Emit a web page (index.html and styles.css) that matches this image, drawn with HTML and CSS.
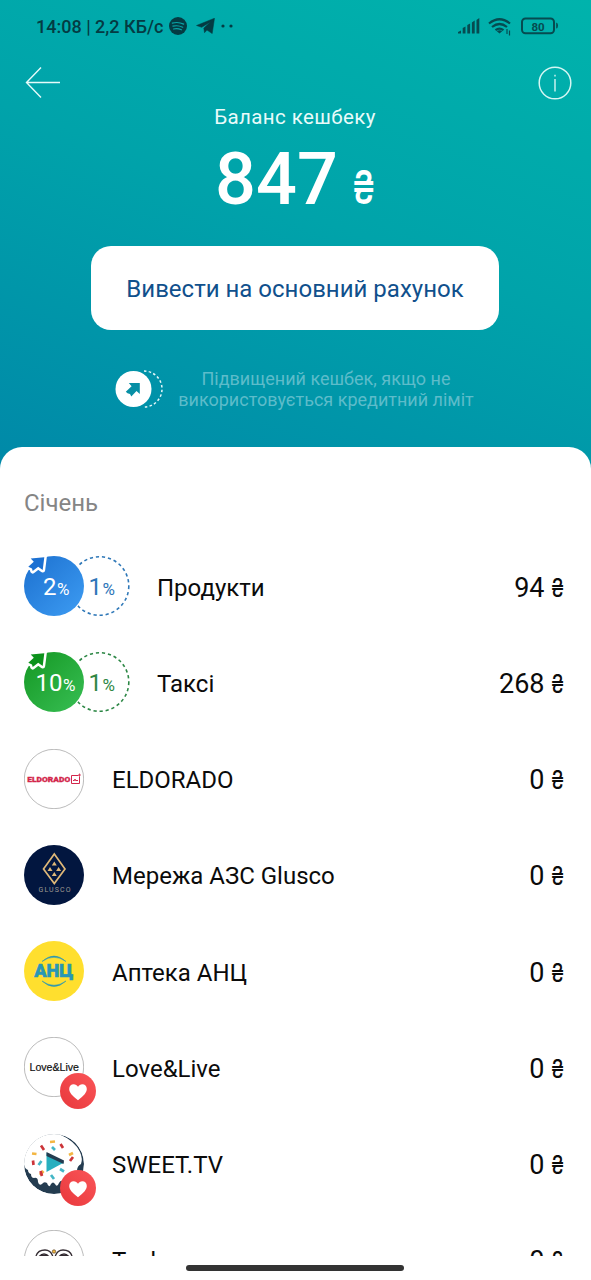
FILE: index.html
```html
<!DOCTYPE html>
<html lang="uk">
<head>
<meta charset="utf-8">
<title>Баланс кешбеку</title>
<link rel="stylesheet" href="styles.css">
</head>
<body>
<svg class="defs" width="0" height="0" aria-hidden="true">
  <defs>
    <linearGradient id="blue" x1="0" y1="0" x2="1" y2="1"><stop offset="0" stop-color="#1c70cf"/><stop offset="1" stop-color="#3d9cf3"/></linearGradient>
    <linearGradient id="green" x1="0" y1="0" x2="1" y2="1"><stop offset="0" stop-color="#149723"/><stop offset="1" stop-color="#38bf54"/></linearGradient>
    <linearGradient id="red" x1="0" y1="1" x2="1" y2="0"><stop offset="0" stop-color="#e8383c"/><stop offset="1" stop-color="#fa5558"/></linearGradient>
    <clipPath id="disc"><circle cx="30" cy="30" r="30"/></clipPath>
    <symbol id="heart" viewBox="0 0 36 36">
      <circle cx="18" cy="18" r="18" fill="url(#red)"/>
      <path d="M18 27.2C12 22.5 9.200 19.500 9.200 16c0-2.800 1.900-4.800 4.500-4.800 1.800 0 3.300.9 4.300 2.500 1-1.600 2.500-2.500 4.300-2.500 2.600 0 4.500 2 4.500 4.800 0 3.500-2.800 6.500-8.800 11.200z" fill="#fff"/>
    </symbol>
  </defs>
</svg>
<div class="screen">
  <header class="hero">
    <div class="status">
      <span class="clock">14:08 | 2,2 КБ/с</span>
      <svg class="spotify" width="18" height="18" viewBox="0 0 18 18"><circle cx="9" cy="9" r="9" fill="#043b43"/><path d="M3.3 6.1q6-1.6 11.4 1M3.9 9.2q5-1.3 9.8 1M4.6 12q4-1 7.8.8" fill="none" stroke="#0aa5a8" stroke-width="1.2" stroke-linecap="round"/></svg>
      <svg class="telegram" width="19" height="16" viewBox="0 0 19 16"><path d="M.5 7.5 18.5.2 16.2 15.6 11 12.1 8.5 14.7 7.8 10 14.5 4 5.7 9.3z" fill="#043b43" stroke="#043b43" stroke-width=".5"/></svg>
      <svg class="dots" width="13" height="4" viewBox="0 0 13 4"><circle cx="2" cy="2" r="1.6" fill="#043b43"/><circle cx="10" cy="2" r="1.6" fill="#043b43"/></svg>
      <svg class="system" width="102" height="20" viewBox="0 0 102 20">
        <path d="M1 17.500v-1.500l3-1.500v3zM5.700 17.500v-5.500l2.800-1.500v7zM10.300 17.500v-8.500l2.800-1.500v10zM14.900 17.500V6.500l2.800-2v13zM19.500 17.500V4l2.800-2v15.500z" fill="#064b50"/>
        <path d="M32 7.500q10.500-8.500 21 0M35 11q7.500-6 15 0M38.500 14.100q4-3 8 0" fill="none" stroke="#064b50" stroke-width="2.200"/>
        <path d="m39.600 15 2.900 2.500 2.900-2.500q-2.900-1.500-5.800 0z" fill="#064b50"/>
        <path d="M50 13v5M52.500 14.500v5" stroke="#064b50" stroke-width="1.200"/>
        <rect x="65" y="2.400" width="32" height="14.800" rx="3.500" fill="none" stroke="#064b50" stroke-width="2"/>
        <path d="M99.200 6.500v6q1.800-.5 1.800-3t-1.800-3z" fill="#064b50"/>
        <text class="battery" x="81" y="14.500">80</text>
      </svg>
    </div>
    <nav class="nav">
      <svg width="36" height="32" viewBox="0 0 36 32"><path d="M35 15.500H2M16 .5 1.500 15.500 16 30.500" fill="none" stroke="#e6fbfa" stroke-width="1.400"/></svg>
      <svg width="34" height="34" viewBox="0 0 34 34"><circle cx="17" cy="17" r="15.800" fill="none" stroke="#d5f6f3" stroke-width="1.500"/><path d="M17 13v12.500M17 8.800v1.800" stroke="#d5f6f3" stroke-width="1.400"/></svg>
    </nav>
    <div class="caption">Баланс кешбеку</div>
    <div class="balance"><span class="sum">847</span><span class="unit">₴</span></div>
    <button class="withdraw">Вивести на основний рахунок</button>
    <div class="hint">
      <svg width="48" height="38" viewBox="0 0 48 38"><path d="M29 1a18 18 0 0 1 0 36" fill="none" stroke="#e6f8fa" stroke-width="1.500" stroke-dasharray="2.500 2.300"/><circle cx="18.500" cy="19" r="18" fill="#fff"/><path d="M13.800 13h11v11l-3.300-3.100-5.200 5.600-1.300-2.500-2.500-.7-1.700-1.600 5.800-5.400z" fill="#078fa5"/></svg>
      <p class="hint-text">Підвищений кешбек, якщо не<br>використовується кредитний ліміт</p>
    </div>
  </header>
  <main class="sheet">
    <h2 class="month">Січень</h2>
    <ul class="list">
      <li class="row">
        <svg class="pair blue" width="108" height="60" viewBox="0 0 108 60"><circle cx="75.500" cy="30" r="29.300" fill="#fff" stroke="#2f78b8" stroke-width="1.600" stroke-dasharray="3.200 2.900"/><circle cx="30" cy="30" r="31" fill="#fff"/><circle cx="30" cy="30" r="30" fill="url(#blue)"/><path class="boost" d="M6.700 2.500 20.300 1.200 18.700 14 14.200 10.700 8.700 15 8 12.500 4.300 10.700 9.800 5.700z" fill="#1b70d2"/><text class="rate light" x="19" y="39">2<tspan class="pct" dx=".5">%</tspan></text><text class="rate" x="64.500" y="39">1<tspan class="pct" dx=".5">%</tspan></text></svg>
        <span class="name">Продукти</span><span class="amount">94<i>₴</i></span>
      </li>
      <li class="row">
        <svg class="pair green" width="108" height="60" viewBox="0 0 108 60"><circle cx="75.500" cy="30" r="29.300" fill="#fff" stroke="#2c8745" stroke-width="1.600" stroke-dasharray="3.200 2.900"/><circle cx="30" cy="30" r="31" fill="#fff"/><circle cx="30" cy="30" r="30" fill="url(#green)"/><path class="boost" d="M6.700 2.500 20.300 1.200 18.700 14 14.200 10.700 8.700 15 8 12.500 4.300 10.700 9.800 5.700z" fill="#0c921c"/><text class="rate light" x="11.500" y="39">10<tspan class="pct" dx=".5">%</tspan></text><text class="rate" x="64.500" y="39">1<tspan class="pct" dx=".5">%</tspan></text></svg>
        <span class="name">Таксі</span><span class="amount">268<i>₴</i></span>
      </li>
      <li class="row">
        <svg class="logo" width="60" height="60" viewBox="0 0 60 60"><circle cx="30" cy="30" r="29.700" fill="#fff" stroke="#777" stroke-width=".5"/><text class="eldorado" x="3.300" y="33.300" textLength="43" lengthAdjust="spacingAndGlyphs">ELDORADO</text><path d="M54.500 26.500H47.500v8h8v-7M49 31.500h1.500l.5-1.500.5 1.500h2.500" fill="none" stroke="#d3264b" stroke-width="1"/><path d="M54 26h3M55.500 24.500v3" stroke="#d3264b" stroke-width=".8"/></svg>
        <span class="name">ELDORADO</span><span class="amount">0<i>₴</i></span>
      </li>
      <li class="row">
        <svg class="logo" width="60" height="60" viewBox="0 0 60 60"><circle cx="30" cy="30" r="30" fill="#02163f"/><path d="M30.300 9 41 24 30.300 38.500 19.500 24z" fill="none" stroke="#dfb878" stroke-width="1.700"/><path d="m30.300 16.500 2.500 4h-5zM26 22l2.500 4h-5zM34.600 22l2.500 4h-5zM30.300 27l2.500 4h-5z" fill="#dfb878"/><text class="glusco" x="14.500" y="46.500" textLength="32">GLUSCO</text></svg>
        <span class="name">Мережа АЗС Glusco</span><span class="amount">0<i>₴</i></span>
      </li>
      <li class="row">
        <svg class="logo" width="60" height="60" viewBox="0 0 60 60"><circle cx="30" cy="30" r="30" fill="#ffdf2e"/><path d="M18 20.500q12-11 24 0-12-8.500-24 0zM18 40q12 11 24 0-12 8.500-24 0z" fill="#2997b5" stroke="#2997b5" stroke-width=".5"/><text class="anc" x="10.300" y="35.800" textLength="39" lengthAdjust="spacingAndGlyphs">АНЦ</text></svg>
        <span class="name">Аптека АНЦ</span><span class="amount">0<i>₴</i></span>
      </li>
      <li class="row">
        <span class="logo"><svg width="60" height="60" viewBox="0 0 60 60"><circle cx="30" cy="30" r="29.700" fill="#fff" stroke="#777" stroke-width=".5"/><text class="lovelive" x="5.500" y="34.300" textLength="49.500" lengthAdjust="spacingAndGlyphs">Love&amp;Live</text></svg><svg class="badge" width="36" height="36"><use href="#heart"/></svg></span>
        <span class="name">Love&amp;Live</span><span class="amount">0<i>₴</i></span>
      </li>
      <li class="row">
        <span class="logo"><svg width="60" height="60" viewBox="0 0 60 60"><g clip-path="url(#disc)"><circle cx="30" cy="30" r="30" fill="#243c50"/><path d="M0 0H35Q51 7 56 18q3 7 1 12-4 2-4 7v6q-3 5-5 1-3-1-4 3-1 5-4 1-3-3-5 1-2 5-4 1-2-3-4 0-2 5-4-1-3-2-5 1-3 2-4-2 0-5-4-4-3 0-3-4-3-1-3-4-3-1-4-5z" fill="#fff"/></g>
          <path d="M22.500 19v19l17.500-9.500z" fill="#27afbf"/><path d="m22.500 18 17.500 8.500-.5 3.500-17-8z" fill="#243c50"/>
          <g fill="none" stroke-width="2.700"><path d="m26 8 5-.5M8 19.500l4.500.500M16 41l3.500-4M45 21l4-2" stroke="#f3b643"/><path d="m17 11.500 3 4.500M36.500 10l2.500 4M9 26.500l.5 4.500M46 27l3-4M16.500 37l1.500 5" stroke="#cc3439"/><path d="m28 13 3 3M14.500 31l3-4M36 35l4 2.500M27 41l3 4" stroke="#43b6c6"/></g></svg><svg class="badge" width="36" height="36"><use href="#heart"/></svg></span>
        <span class="name">SWEET.TV</span><span class="amount">0<i>₴</i></span>
      </li>
      <li class="row">
        <svg class="logo" width="60" height="60" viewBox="0 0 60 60"><circle cx="30" cy="30" r="29.700" fill="#fff" stroke="#777" stroke-width=".5"/><g fill="none" stroke="#332b31"><path d="M12 26q2-6 9-6 6 0 8 7M31 27q2-7 8-7 7 0 9 6" stroke-width="1.300"/><path d="M14 28q6-8 12 0M34 28q6-8 12 0" stroke-width="1.500"/><path d="M17 26h7M36 26h7" stroke-width="2.500"/></g><circle cx="30" cy="21.500" r="1.700" fill="#f2b63c" stroke="#5b4326" stroke-width=".7"/></svg>
        <span class="name">Task</span><span class="amount">0<i>₴</i></span>
      </li>
    </ul>
  </main>
  <footer class="home"><span class="handle"></span></footer>
</div>
</body>
</html>
```
FILE: styles.css
```css
* { box-sizing: border-box; }
body { margin: 0; font-family: Roboto, "Noto Sans", sans-serif; color: #0b0b0b; background: #fff; }
.defs { position: absolute; }
.screen { width: 591px; height: 1280px; display: flex; flex-direction: column; overflow: hidden; background: #fff; }
.hero { flex: none; height: 477px; padding-right: 1px; display: flex; flex-direction: column; align-items: center; background: linear-gradient(200deg, #00b3ac 0%, #00a3aa 46%, #0088a8 100%); color: #fff; }
.status { width: 100%; height: 52px; flex: none; padding: 0 31px 0 36px; display: flex; align-items: center; color: #043b43; }
.clock { font-size: 18px; font-weight: 500; width: 128px; white-space: nowrap; }
.spotify { margin-left: 5px; }
.telegram { margin-left: 9px; }
.dots { margin-left: 6px; }
.system { margin-left: auto; }
.battery { font: 700 11.500px Roboto, sans-serif; fill: #064b50; text-anchor: middle; }
.nav { width: 100%; height: 34px; flex: none; margin-top: 14px; padding: 0 18px 0 25px; display: flex; justify-content: space-between; align-items: center; }
.caption { margin-top: 4px; font-size: 20.500px; line-height: 26px; letter-spacing: .4px; color: #e9fbfa; }
.balance { height: 78px; margin-top: 11px; display: flex; align-items: baseline; line-height: 78px; }
.sum { font-size: 72px; font-weight: 500; }
.unit { display: inline-block; width: 23px; margin-left: 14px; font-family: Inter, sans-serif; font-size: 46px; font-weight: 500; transform: scaleX(.76); transform-origin: 0 50%; }
.withdraw { flex: none; width: 408px; height: 84px; margin-top: 27px; border: 0; border-radius: 20px; background: #fff; color: #10508c; font: 400 24px Roboto, sans-serif; padding: 2px 0 0; white-space: nowrap; }
.hint { display: flex; align-items: center; gap: 15px; margin-top: 38px; padding-right: 1px; }
.hint-text { margin: 0; font-size: 18px; line-height: 21px; text-align: center; color: #5dbcca; white-space: nowrap; }
.sheet { flex: none; height: 809px; margin-top: -30px; border-radius: 22px 22px 0 0; background: #fff; padding: 40px 26px 0 24px; overflow: hidden; }
.month { margin: 0; font-size: 24px; line-height: 32px; font-weight: 400; color: #858585; }
.list { margin: 19px 0 0; padding: 0; list-style: none; }
.row { height: 96.250px; display: flex; align-items: center; }
.logo { flex: none; width: 60px; height: 60px; margin-right: 28px; position: relative; }
.pair { flex: none; margin-right: 25px; overflow: visible; }
.logo svg { display: block; }
.logo .badge { position: absolute; left: 36px; top: 36px; }
.name { font-size: 24px; line-height: 30px; padding-top: 3px; flex: 1; white-space: nowrap; }
.amount { font-size: 27px; line-height: 30px; padding-top: 3px; white-space: nowrap; }
.amount i { display: inline-block; width: 14px; margin-left: 6.500px; font: 400 26px/26px Inter, sans-serif; transform: scaleX(.8); transform-origin: 0 50%; }
.rate { font: 400 24px Roboto, sans-serif; }
.pct { font-size: 17px; }
.boost { stroke: #fff; stroke-width: 5; stroke-linejoin: round; paint-order: stroke; }
.blue .rate { fill: #2e76b9; }
.green .rate { fill: #308743; }
.pair .light { fill: #fff; }
.eldorado { font: 900 8px Roboto, sans-serif; fill: #d3264b; stroke: #d3264b; stroke-width: .3px; }
.glusco { font: 400 7px Roboto, sans-serif; fill: #a09a91; }
.anc { font: 900 19px Roboto, sans-serif; fill: #2997b5; stroke: #2997b5; stroke-width: .6px; }
.lovelive { font: 400 11.500px "Liberation Sans", sans-serif; fill: #111; stroke: #111; stroke-width: .2px; }
.home { flex: 1; display: flex; align-items: center; justify-content: center; padding-right: 1px; }
.handle { width: 218px; height: 6px; border-radius: 3px; background: #333; }
```
